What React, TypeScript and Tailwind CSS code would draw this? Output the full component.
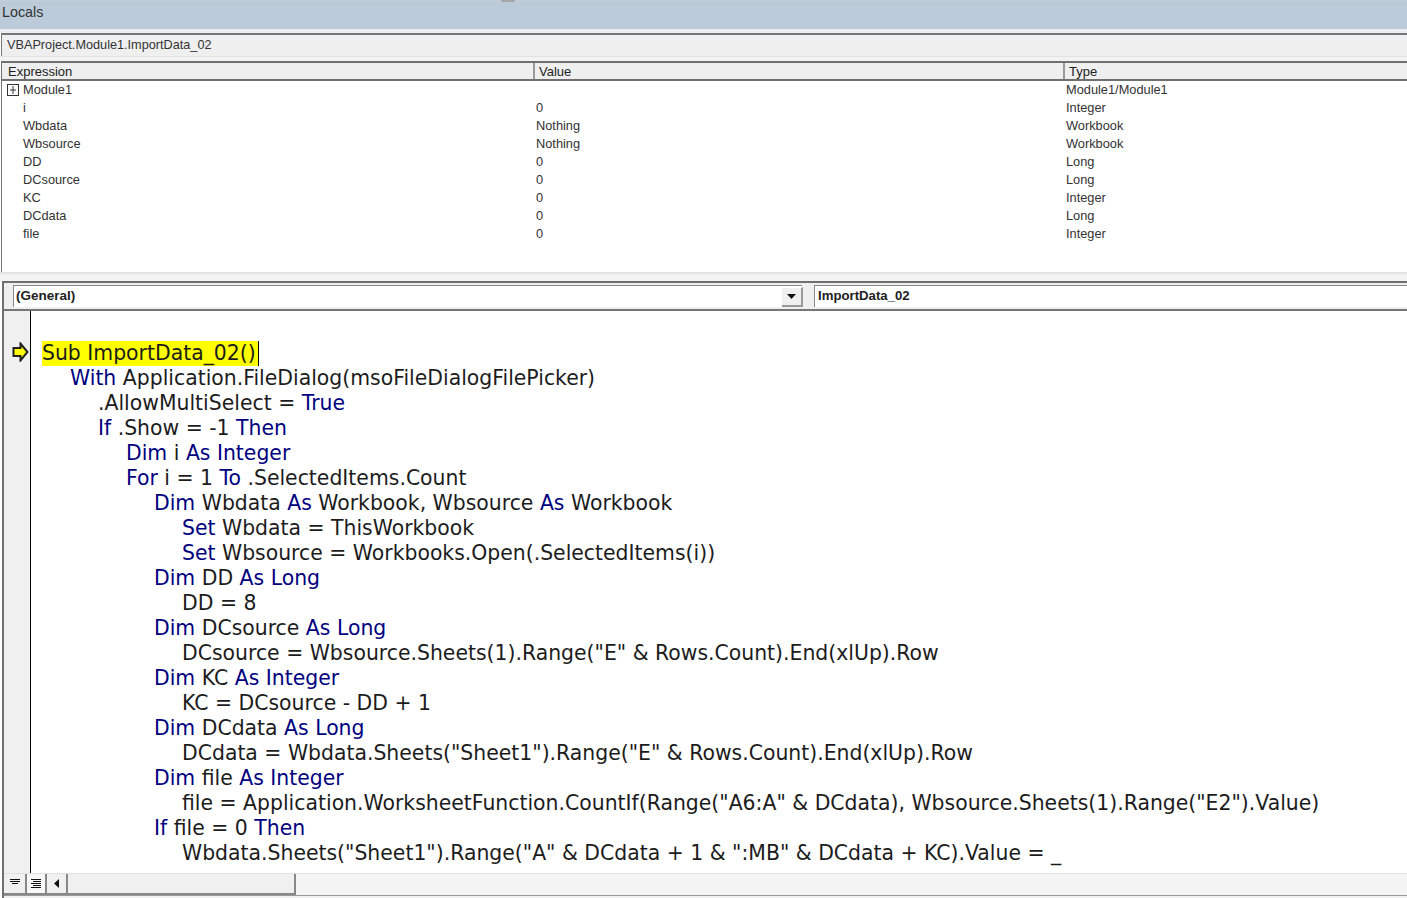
import React from "react";

type Seg = [string, boolean?];
const indents = ["pl-0", "pl-[28px]", "pl-[56px]", "pl-[84px]", "pl-[112px]", "pl-[140px]"];

const code: { level: number; segs: Seg[] }[] = [
  { level: 1, segs: [["With", true], [" Application.FileDialog(msoFileDialogFilePicker)"]] },
  { level: 2, segs: [[".AllowMultiSelect = "], ["True", true]] },
  { level: 2, segs: [["If", true], [" .Show = -1 "], ["Then", true]] },
  { level: 3, segs: [["Dim", true], [" i "], ["As", true], [" "], ["Integer", true]] },
  { level: 3, segs: [["For", true], [" i = 1 "], ["To", true], [" .SelectedItems.Count"]] },
  { level: 4, segs: [["Dim", true], [" Wbdata "], ["As", true], [" Workbook, Wbsource "], ["As", true], [" Workbook"]] },
  { level: 5, segs: [["Set", true], [" Wbdata = ThisWorkbook"]] },
  { level: 5, segs: [["Set", true], [" Wbsource = Workbooks.Open(.SelectedItems(i))"]] },
  { level: 4, segs: [["Dim", true], [" DD "], ["As", true], [" "], ["Long", true]] },
  { level: 5, segs: [["DD = 8"]] },
  { level: 4, segs: [["Dim", true], [" DCsource "], ["As", true], [" "], ["Long", true]] },
  { level: 5, segs: [['DCsource = Wbsource.Sheets(1).Range("E" & Rows.Count).End(xlUp).Row']] },
  { level: 4, segs: [["Dim", true], [" KC "], ["As", true], [" "], ["Integer", true]] },
  { level: 5, segs: [["KC = DCsource - DD + 1"]] },
  { level: 4, segs: [["Dim", true], [" DCdata "], ["As", true], [" "], ["Long", true]] },
  { level: 5, segs: [['DCdata = Wbdata.Sheets("Sheet1").Range("E" & Rows.Count).End(xlUp).Row']] },
  { level: 4, segs: [["Dim", true], [" file "], ["As", true], [" "], ["Integer", true]] },
  { level: 5, segs: [['file = Application.WorksheetFunction.CountIf(Range("A6:A" & DCdata), Wbsource.Sheets(1).Range("E2").Value)']] },
  { level: 4, segs: [["If", true], [" file = 0 "], ["Then", true]] },
  { level: 5, segs: [['Wbdata.Sheets("Sheet1").Range("A" & DCdata + 1 & ":MB" & DCdata + KC).Value = _']] },
];

const locals = [
  ["Module1", "", "Module1/Module1"],
  ["i", "0", "Integer"],
  ["Wbdata", "Nothing", "Workbook"],
  ["Wbsource", "Nothing", "Workbook"],
  ["DD", "0", "Long"],
  ["DCsource", "0", "Long"],
  ["KC", "0", "Integer"],
  ["DCdata", "0", "Long"],
  ["file", "0", "Integer"],
];

export default function App() {
  return (
    <div className="w-[1407px] h-[898px] overflow-hidden bg-white flex flex-col text-[12.8px] text-[#222] font-['Liberation_Sans',Arial,sans-serif]">
      {/* Locals title */}
      <div className="relative h-[29px] shrink-0 bg-[#bccbda] border-t border-[#c4ced6] pl-[2px] pt-[3px] text-[14.3px] leading-[16px] text-[#333]">
        Locals
        <div className="absolute left-[501px] top-[-1px] w-[14px] h-[2px] bg-[#a8a8a8]" />
      </div>
      <div className="h-[4px] shrink-0 bg-[#e9eef4]" />

      {/* Context bar */}
      <div className="h-[23px] shrink-0 ml-[1px] bg-[#efefef] border-t-2 border-l border-[#777] pl-[5px] pt-[2px] text-[12.7px] leading-[16px] text-[#333]">
        VBAProject.Module1.ImportData_02
      </div>
      <div className="h-[5px] shrink-0 bg-[#f3f3f3] border-t border-[#e2e2e2]" />

      {/* Header */}
      <div className="h-[20px] shrink-0 ml-[1px] flex bg-[#efefef] border-y-2 border-[#707070] border-l text-[13px] leading-[16px] text-[#222]">
        <div className="w-[533px] pl-[6px] pt-[1px] border-r-2 border-[#999]">Expression</div>
        <div className="w-[530px] pl-[4px] pt-[1px] border-r-2 border-[#999]">Value</div>
        <div className="pl-[4px] pt-[1px]">Type</div>
      </div>

      {/* Locals rows */}
      <div className="h-[191px] shrink-0 ml-[1px] border-l border-[#777]">
        {locals.map((r, i) => (
          <div key={r[0]} className="h-[18px] flex leading-[17px] text-[#333]">
            <div className="w-[534px] pl-[21px] relative">
              {i === 0 && (
                <svg className="absolute left-[5px] top-[3px]" width="12" height="12" viewBox="0 0 12 12">
                  <rect x="0.5" y="0.5" width="11" height="11" fill="#fff" stroke="#333" />
                  <path d="M3 6h6M6 2v8" stroke="#333" fill="none" />
                </svg>
              )}
              {r[0]}
            </div>
            <div className="w-[530px]">{r[1]}</div>
            <div>{r[2]}</div>
          </div>
        ))}
      </div>
      <div className="h-[9px] shrink-0 bg-[#f3f3f3] border-t-2 border-[#e4e4e4]" />

      {/* Code pane */}
      <div className="flex-1 min-h-0 ml-[2px] border-t-[2px] border-l-2 border-[#707070] flex flex-col">
        {/* Combos */}
        <div className="h-[26px] shrink-0 flex bg-[#efefef] pt-[2px] pl-[9px]">
          <div className="w-[789px] h-[22px] bg-white border-l border-t border-[#8a8a8a] flex items-center justify-between">
            <span className="pl-[2px] pb-[1px] font-bold text-[13.5px] text-[#222]">(General)</span>
            <div className="w-[21px] h-[20px] mr-[-1px] bg-[#efefef] border-r-2 border-b-2 border-[#999] border-t border-t-white flex items-center justify-center">
              <svg width="9" height="5" viewBox="0 0 9 5"><path d="M0 0h9L4.5 5z" fill="#111" /></svg>
            </div>
          </div>
          <div className="ml-[12px] flex-1 h-[22px] bg-white border-l border-t border-[#8a8a8a] flex items-center">
            <span className="pl-[3px] pb-[2px] font-bold text-[13.2px] text-[#222]">ImportData_02</span>
          </div>
        </div>
        <div className="h-[2px] shrink-0 bg-[#777]" />

        {/* Code */}
        <div className="h-[562px] shrink-0 flex min-h-0">
          <div className="w-[27px] shrink-0 bg-[#f0f0f0] border-r border-black relative">
            <svg className="absolute left-[8px] top-[31px]" width="17" height="20" viewBox="0 0 17 20">
              <path d="M1.5 6h7V1.5L15.5 10l-7 8.5V14h-7z" fill="#ffff00" stroke="#222" strokeWidth="2" />
            </svg>
          </div>
          <div className="flex-1 min-w-0 pl-[11px] pt-[30px] font-['DejaVu_Sans',Verdana,sans-serif] text-[20.4px] leading-[25px] text-[#1c1c1c] whitespace-pre overflow-hidden">
            <div className="h-[25px] flex">
              <span className="bg-[#ffff00] border-r border-black pr-[2px]">Sub ImportData_02()</span>
            </div>
            {code.map((l, i) => (
              <div key={i} className={"h-[25px] " + indents[l.level]}>
                {l.segs.map((s, j) =>
                  s[1] ? (
                    <span key={j} className="text-[#00007f]">{s[0]}</span>
                  ) : (
                    <span key={j}>{s[0]}</span>
                  )
                )}
              </div>
            ))}
          </div>
        </div>

        {/* Scrollbar */}
        <div className="h-[22px] shrink-0 flex bg-[#f4f4f4] border-t border-[#e0e0e0]">
          <div className="w-[23px] border-r-2 border-b-2 border-[#888] bg-[#f0f0f0] flex items-center justify-center pb-[3px]">
            <svg width="12" height="8" viewBox="0 0 12 8"><path d="M1 1.5h10M1 3.5h10M3 5.5h6" stroke="#111" fill="none" /></svg>
          </div>
          <div className="w-[20px] border-r-2 border-b-2 border-[#888] bg-[#f8f8f8] flex items-center justify-center">
            <svg width="12" height="11" viewBox="0 0 12 11"><path d="M1 1.5h10M3 3.5h8M1 5.5h10M3 7.5h8M1 9.5h10" stroke="#111" fill="none" /></svg>
          </div>
          <div className="w-[21px] border-r-2 border-b-2 border-[#888] bg-[#f0f0f0] flex items-center justify-center">
            <svg width="6" height="9" viewBox="0 0 6 9"><path d="M5 0v9L0 4.5z" fill="#111" /></svg>
          </div>
          <div className="w-[228px] border-r-2 border-b-2 border-[#888] bg-[#f0f0f0]" />
          <div className="flex-1 bg-[#f4f4f4]" />
        </div>
        <div className="flex-1 bg-[#f0f0f0] border-t border-[#999]" />
      </div>
    </div>
  );
}
